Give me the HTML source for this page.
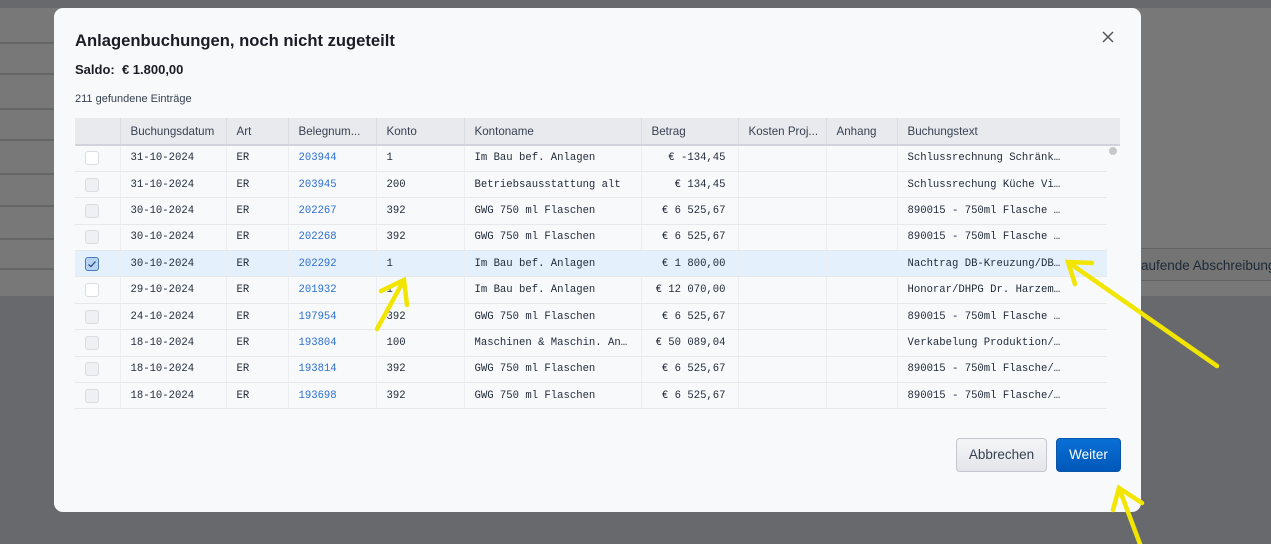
<!DOCTYPE html>
<html><head><meta charset="utf-8"><style>
*{box-sizing:border-box;margin:0;padding:0}
body{width:1271px;height:544px;overflow:hidden;background:#68696d;font-family:"Liberation Sans",sans-serif;position:relative}
.bgtop{position:absolute;left:0;top:8px;width:1271px;height:288px;background:#777877}
.bl{position:absolute;left:0;width:60px;height:2px;background:#656666}
.rbar{position:absolute;left:1141px;top:248px;width:130px;height:33px;background:#737473;border-top:1px solid #626262;border-bottom:1px solid #626262;font-size:13.5px;color:#1f2937;line-height:33px;white-space:nowrap;overflow:hidden}
.modal{position:absolute;left:54px;top:8px;width:1087px;height:504px;background:#f8f9fb;border-radius:9px}
h1{position:absolute;left:21px;top:23px;font-size:16.6px;font-weight:bold;color:#1a1d24}
.saldo{position:absolute;left:21px;top:54px;font-size:13px;font-weight:bold;color:#1a1d24}
.cnt{position:absolute;left:21px;top:85px;font-size:11px;color:#374151}
.x{position:absolute;left:1047px;top:22px}
table{position:absolute;left:21px;top:110px;border-collapse:collapse;table-layout:fixed}
th{height:27px;background:#e9eaee;font-weight:normal;font-size:11.6px;color:#374151;text-align:left;padding-left:10px;border-left:1px solid #dcdde2;border-bottom:2px solid #d0d3dc;white-space:nowrap;overflow:hidden}
th:first-child{border-left:none}
th.e{border-left:none;padding:0}
td{height:26.4px;font-family:"Liberation Mono",monospace;font-size:10.6px;color:#1f2937;padding-left:10px;border-left:1px solid #eceef1;border-bottom:1px solid #e6e8ec;white-space:nowrap;overflow:hidden}
td:first-child{border-left:none;padding-left:10px}
td.e{border:none;background:transparent!important;padding:0}
td.r{text-align:right;padding-right:12px}
a{color:#2b6fd0;text-decoration:none}
.cb{width:14px;height:14px;border:1px solid #d9dce1;border-radius:3px;background:#eef0f3}
.cb.w{background:#fff}
tr.sel td{background:#e5f0fd}
.cb.on{background:#b9d3f3;border-color:#4a7ab8;position:relative}
.btn{position:absolute;top:430px;height:34px;border-radius:4px;font-size:13.5px;text-align:center;line-height:32px}
.ab{left:902px;width:91px;background:linear-gradient(#f4f5f7,#e3e5e9);border:1px solid #c3c7cf;color:#374151}
.we{left:1002px;width:65px;background:linear-gradient(#0a6fd6,#0058b8);border:1px solid #0a55aa;color:#fff}
.dot{position:absolute;left:1055px;top:139px;width:8px;height:8px;border-radius:50%;background:#c6c8cc}
svg.ar{position:absolute;left:0;top:0}
</style></head><body>
<div class="bgtop"></div>
<div class="bl" style="top:42px"></div><div class="bl" style="top:73px"></div><div class="bl" style="top:108px"></div><div class="bl" style="top:139px"></div><div class="bl" style="top:173px"></div><div class="bl" style="top:205px"></div><div class="bl" style="top:238px"></div><div class="bl" style="top:268px"></div>
<div class="rbar">aufende Abschreibung</div>
<div class="modal">
<h1>Anlagenbuchungen, noch nicht zugeteilt</h1>
<div class="saldo">Saldo:&nbsp; € 1.800,00</div>
<div class="cnt">211 gefundene Einträge</div>
<svg class="x" width="14" height="14" viewBox="0 0 14 14"><path d="M2 2L12 12M12 2L2 12" stroke="#555" stroke-width="1.5"/></svg>
<div class="dot"></div>
<table>
<colgroup><col style="width:45px"><col style="width:106px"><col style="width:62px"><col style="width:88px"><col style="width:88px"><col style="width:177px"><col style="width:97px"><col style="width:88px"><col style="width:71px"><col style="width:210px"><col style="width:13px"></colgroup>
<tr><th></th><th>Buchungsdatum</th><th>Art</th><th>Belegnum...</th><th>Konto</th><th>Kontoname</th><th>Betrag</th><th>Kosten Proj...</th><th>Anhang</th><th>Buchungstext</th><th class="e"></th></tr>
<tr><td><div class="cb w"></div></td><td>31-10-2024</td><td>ER</td><td><a>203944</a></td><td>1</td><td>Im Bau bef. Anlagen</td><td class="r">€ -134,45</td><td></td><td></td><td>Schlussrechnung Schränk…</td><td class="e"></td></tr>
<tr><td><div class="cb"></div></td><td>31-10-2024</td><td>ER</td><td><a>203945</a></td><td>200</td><td>Betriebsausstattung alt</td><td class="r">€ 134,45</td><td></td><td></td><td>Schlussrechung Küche Vi…</td><td class="e"></td></tr>
<tr><td><div class="cb"></div></td><td>30-10-2024</td><td>ER</td><td><a>202267</a></td><td>392</td><td>GWG 750 ml Flaschen</td><td class="r">€ 6 525,67</td><td></td><td></td><td>890015 - 750ml Flasche …</td><td class="e"></td></tr>
<tr><td><div class="cb"></div></td><td>30-10-2024</td><td>ER</td><td><a>202268</a></td><td>392</td><td>GWG 750 ml Flaschen</td><td class="r">€ 6 525,67</td><td></td><td></td><td>890015 - 750ml Flasche …</td><td class="e"></td></tr>
<tr class="sel"><td><div class="cb on"><svg width="12" height="12" style="position:absolute;left:0;top:0" viewBox="0 0 12 12"><path d="M2.5 6.5L5 8.5L9.5 3.5" stroke="#2b4f80" stroke-width="1.3" fill="none"/></svg></div></td><td>30-10-2024</td><td>ER</td><td><a>202292</a></td><td>1</td><td>Im Bau bef. Anlagen</td><td class="r">€ 1 800,00</td><td></td><td></td><td>Nachtrag DB-Kreuzung/DB…</td><td class="e"></td></tr>
<tr><td><div class="cb w"></div></td><td>29-10-2024</td><td>ER</td><td><a>201932</a></td><td>1</td><td>Im Bau bef. Anlagen</td><td class="r">€ 12 070,00</td><td></td><td></td><td>Honorar/DHPG Dr. Harzem…</td><td class="e"></td></tr>
<tr><td><div class="cb"></div></td><td>24-10-2024</td><td>ER</td><td><a>197954</a></td><td>392</td><td>GWG 750 ml Flaschen</td><td class="r">€ 6 525,67</td><td></td><td></td><td>890015 - 750ml Flasche …</td><td class="e"></td></tr>
<tr><td><div class="cb"></div></td><td>18-10-2024</td><td>ER</td><td><a>193804</a></td><td>100</td><td>Maschinen &amp; Maschin. An…</td><td class="r">€ 50 089,04</td><td></td><td></td><td>Verkabelung Produktion/…</td><td class="e"></td></tr>
<tr><td><div class="cb"></div></td><td>18-10-2024</td><td>ER</td><td><a>193814</a></td><td>392</td><td>GWG 750 ml Flaschen</td><td class="r">€ 6 525,67</td><td></td><td></td><td>890015 - 750ml Flasche/…</td><td class="e"></td></tr>
<tr><td><div class="cb"></div></td><td>18-10-2024</td><td>ER</td><td><a>193698</a></td><td>392</td><td>GWG 750 ml Flaschen</td><td class="r">€ 6 525,67</td><td></td><td></td><td>890015 - 750ml Flasche/…</td><td class="e"></td></tr>
</table>
<div class="btn ab">Abbrechen</div>
<div class="btn we">Weiter</div>
</div>
<svg class="ar" width="1271" height="544" viewBox="0 0 1271 544"><g stroke="#f2e600" stroke-width="4.5" stroke-linecap="round" fill="none">
<path d="M377 329L404 280M381 291L404 280L407 305"/>
<path d="M1217 366L1068 262M1092 263L1068 262L1075 284"/>
<path d="M1140 544L1119 488M1113 510L1119 488L1142 503"/>
</g></svg>
</body></html>
